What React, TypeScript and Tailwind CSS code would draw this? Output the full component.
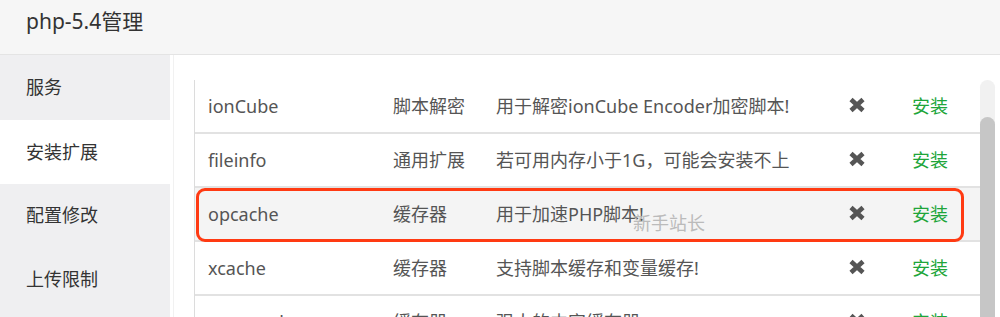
import React from "react";

const rows = [
  { name: "ionCube", type: "脚本解密", desc: "用于解密ionCube Encoder加密脚本!" },
  { name: "fileinfo", type: "通用扩展", desc: "若可用内存小于1G，可能会安装不上" },
  { name: "opcache", type: "缓存器", desc: "用于加速PHP脚本!", hl: true },
  { name: "xcache", type: "缓存器", desc: "支持脚本缓存和变量缓存!" },
  { name: "memcache", type: "缓存器", desc: "强大的内容缓存器" },
];

const XIcon = () => (
  <svg width="18" height="16" viewBox="0 0 18 16">
    <path d="M3 2.5 L15 13.5 M15 2.5 L3 13.5" stroke="#555" strokeWidth="4.6" strokeLinecap="butt" />
  </svg>
);

export default function App() {
  const font = {
    fontFamily: '"Noto Sans", "Noto Sans CJK SC", sans-serif',
  } as React.CSSProperties;
  return (
    <div className="w-[1000px] h-[317px] overflow-hidden bg-white flex flex-col" style={font}>
      <div className="h-[55px] shrink-0 bg-[#f6f6f6] border-b border-[#e4e4e4] flex items-center pl-[26px] pb-[11px] text-[21px] text-[#333]">
        php-5.4管理
      </div>
      <div className="flex flex-1 min-h-0">
        <div className="w-[170px] shrink-0 bg-[#efeff1] flex flex-col text-[18px] text-[#333]">
          <div className="h-[65px] flex items-center pl-[26px] pb-[1px]">服务</div>
          <div className="h-[64px] flex items-center pl-[26px] bg-white">安装扩展</div>
          <div className="h-[64px] flex items-center pl-[26px] pb-[2px]">配置修改</div>
          <div className="h-[64px] flex items-center pl-[26px] pb-[2px]">上传限制</div>
        </div>
        <div className="flex-1 ml-[3px] border-l border-[#f1f1f1] pl-[20px] pt-[25px] pr-[5px] flex min-h-0">
          <div className="w-[786px] border-l border-[#dcdcdc] text-[18px] text-[#555] relative">
            {rows.map((r) => (
              <div
                key={r.name}
                className={`relative h-[54px] border-b-2 border-[#e2e2e2] flex items-center ${r.hl ? "bg-[#f4f4f4]" : ""}`}
              >
                <div className="w-[185px] pl-[13px] shrink-0">{r.name}</div>
                <div className="w-[103px] pl-[13px] shrink-0">{r.type}</div>
                <div className="w-[353px] pl-[13px] shrink-0 whitespace-nowrap">{r.desc}</div>
                <div className="w-[63px] pl-[12px] shrink-0 flex items-center pb-[3px]">
                  <XIcon />
                </div>
                <div className="pl-[13px] text-[#20a53a]">安装</div>
                {r.hl && (
                  <div className="absolute left-[1px] top-0 w-[768px] h-[54px] border-[3px] border-[#ff3a12] rounded-[9px]" />
                )}
                {r.hl && (
                  <div className="absolute left-[438px] top-[22px] text-[18px] text-[#b5b5b5] opacity-90">新手站长</div>
                )}
              </div>
            ))}
          </div>
          <div className="w-[15px] shrink-0 bg-[#f1f1f1] rounded-t-[8px] flex flex-col pt-[37px]">
            <div className="flex-1 bg-[#c6c6c6] rounded-t-[8px]" />
          </div>
        </div>
      </div>
    </div>
  );
}
